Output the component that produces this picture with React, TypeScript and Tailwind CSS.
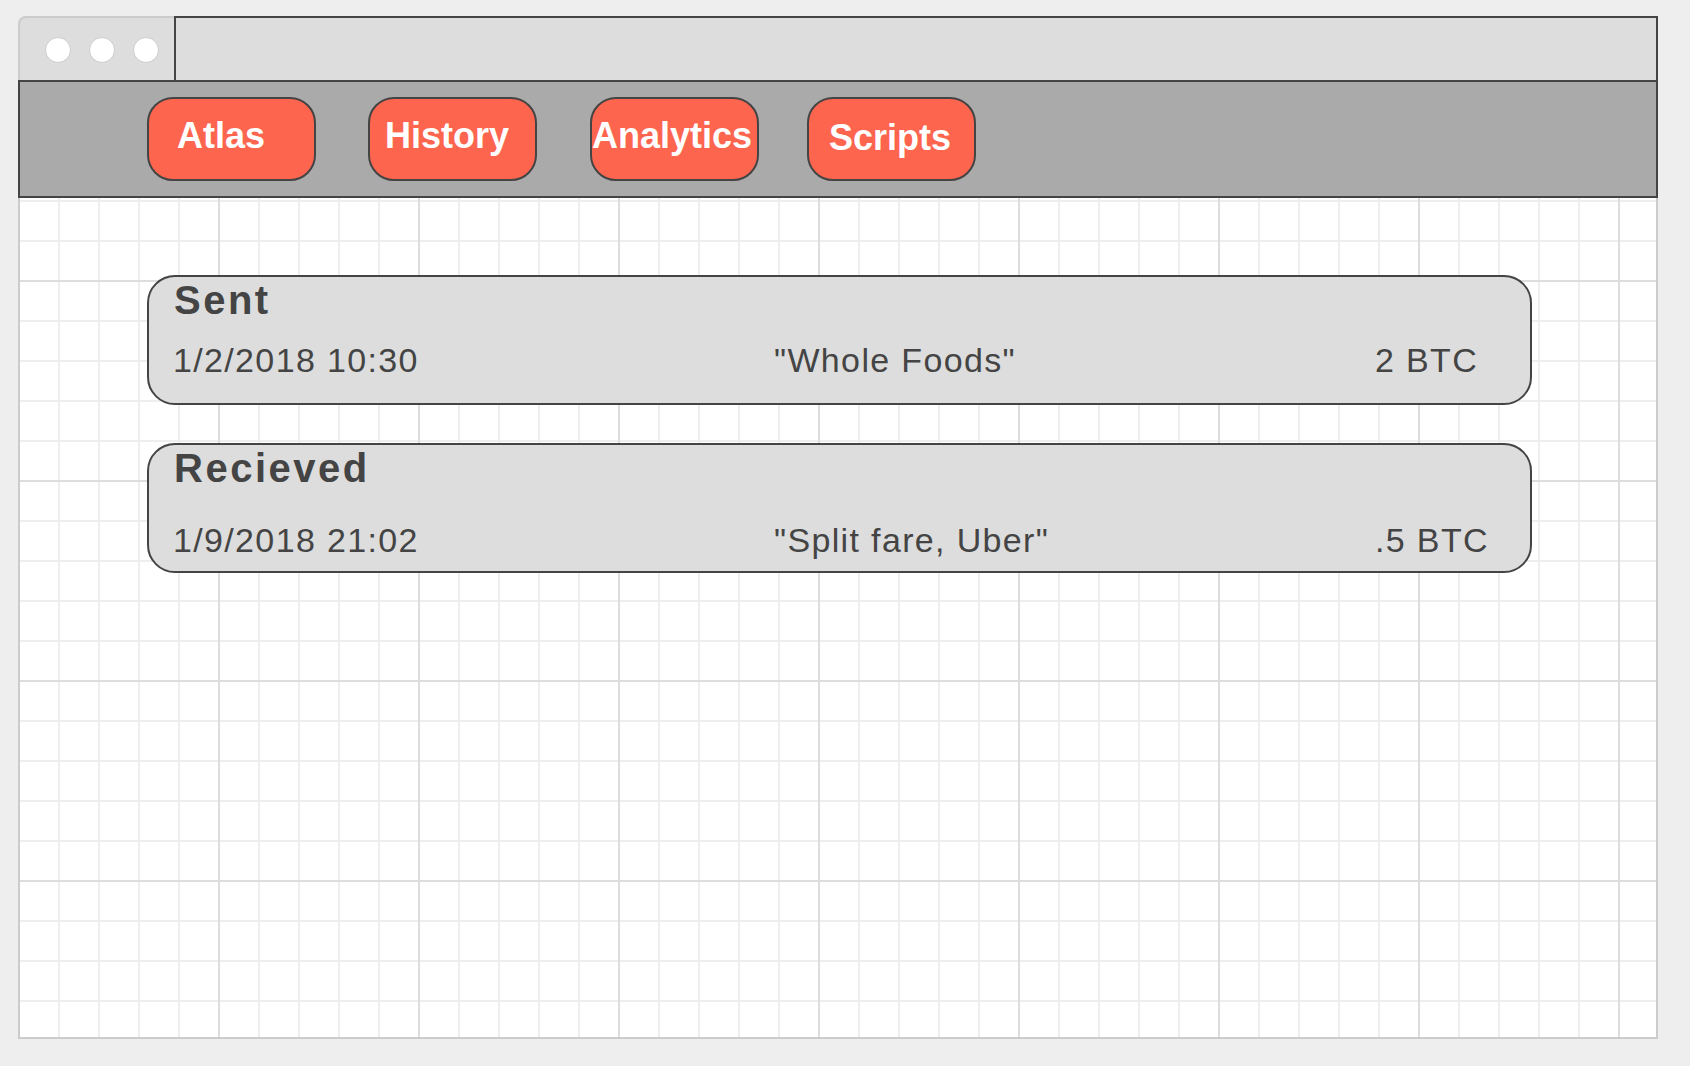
const tabs = [
  { label: "Atlas", pad: "pl-[28px] pt-[19px]", gap: "ml-0" },
  { label: "History", pad: "pl-[15px] pt-[19px]", gap: "ml-[52px]" },
  { label: "Analytics", pad: "pl-0 pt-[19px]", gap: "ml-[53px]" },
  { label: "Scripts", pad: "pl-[20px] pt-[21px]", gap: "ml-[48px]" },
];

const transactions = [
  { title: "Sent", when: "1/2/2018 10:30", memo: '"Whole Foods"', amount: "2 BTC", rowGap: "mt-[23px]" },
  { title: "Recieved", when: "1/9/2018 21:02", memo: '"Split fare, Uber"', amount: ".5 BTC", rowGap: "mt-[35px]" },
];

export default function App() {
  return (
    <div className="min-h-screen bg-[#eeeeee] pl-[18px] pt-4 pb-[27px] font-['Liberation_Sans',Arial,sans-serif]">
      <div className="w-[1640px] h-[1023px] flex flex-col">
        {/* window chrome */}
        <div className="flex h-[64px]">
          <div className="w-[156px] bg-[#dddddd] border-l-2 border-t-2 border-[#cccccc] rounded-tl-[8px] flex items-start gap-[18px] pl-[25px] pt-[19px]">
            {[0, 1, 2].map((i) => (
              <span key={i} className="w-[26px] h-[26px] rounded-full bg-white border-[1.5px] border-[#cccccc]" />
            ))}
          </div>
          <div className="flex-1 bg-[#dddddd] border-x-2 border-t-2 border-[#444444]" />
        </div>

        <nav className="h-[118px] bg-[#aaaaaa] border-2 border-[#444444] flex items-center pl-[127px]">
          {tabs.map((t) => (
            <button
              key={t.label}
              className={`w-[169px] h-[84px] rounded-[26px] border-2 border-[#444444] bg-[#fe654f] text-white font-bold text-[36px] leading-none flex items-start justify-start cursor-pointer ${t.pad} ${t.gap}`}
            >
              {t.label}
            </button>
          ))}
        </nav>

        <main className="flex-1 border-x-2 border-b-2 border-[#cccccc] bg-white bg-[image:linear-gradient(to_right,#dddddd_2px,transparent_2px),linear-gradient(to_bottom,#dddddd_2px,transparent_2px),linear-gradient(to_right,#eeeeee_2px,transparent_2px),linear-gradient(to_bottom,#eeeeee_2px,transparent_2px)] bg-[length:200px_200px,200px_200px,40px_40px,40px_40px] bg-[position:-2px_82px,-2px_82px,-2px_2px,-2px_2px] pl-[127px] pt-[77px] flex flex-col gap-[38px]">
          {transactions.map((tx) => (
            <div
              key={tx.title}
              className="w-[1385px] h-[130px] rounded-[28px] border-2 border-[#444444] bg-[#dddddd] text-[#444444] pt-[3px]"
            >
              <h2 className="pl-[25px] text-[40px] font-bold leading-none tracking-[2.5px]">{tx.title}</h2>
              <div className={`grid grid-cols-[601px_601px_auto] pl-[24px] text-[34px] leading-none tracking-[1.35px] ${tx.rowGap}`}>
                <span>{tx.when}</span>
                <span>{tx.memo}</span>
                <span>{tx.amount}</span>
              </div>
            </div>
          ))}
        </main>
      </div>
    </div>
  );
}
